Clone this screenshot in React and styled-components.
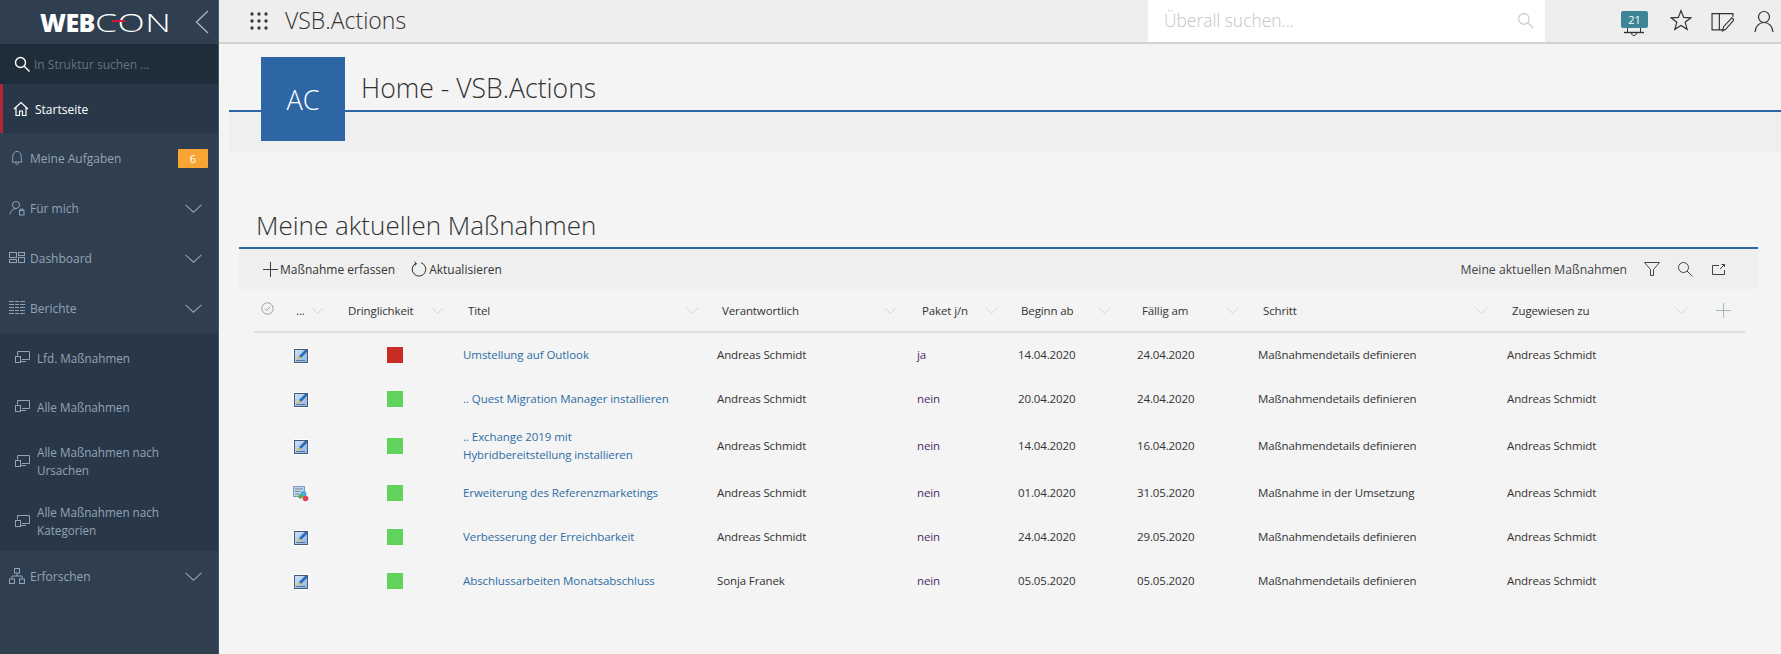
import React from 'react';
import styled, { createGlobalStyle } from 'styled-components';

const rows = [
  { icon: 'edit', prio: 'high', title: ['Umstellung auf Outlook'], owner: 'Andreas Schmidt', pack: 'ja', from: '14.04.2020', due: '24.04.2020', step: 'Maßnahmendetails definieren', to: 'Andreas Schmidt' },
  { icon: 'edit', prio: 'ok', title: ['.. Quest Migration Manager installieren'], owner: 'Andreas Schmidt', pack: 'nein', from: '20.04.2020', due: '24.04.2020', step: 'Maßnahmendetails definieren', to: 'Andreas Schmidt' },
  { icon: 'edit', prio: 'ok', title: ['.. Exchange 2019 mit', 'Hybridbereitstellung installieren'], owner: 'Andreas Schmidt', pack: 'nein', from: '14.04.2020', due: '16.04.2020', step: 'Maßnahmendetails definieren', to: 'Andreas Schmidt', tall: true },
  { icon: 'run', prio: 'ok', title: ['Erweiterung des Referenzmarketings'], owner: 'Andreas Schmidt', pack: 'nein', from: '01.04.2020', due: '31.05.2020', step: 'Maßnahme in der Umsetzung', to: 'Andreas Schmidt' },
  { icon: 'edit', prio: 'ok', title: ['Verbesserung der Erreichbarkeit'], owner: 'Andreas Schmidt', pack: 'nein', from: '24.04.2020', due: '29.05.2020', step: 'Maßnahmendetails definieren', to: 'Andreas Schmidt' },
  { icon: 'edit', prio: 'ok', title: ['Abschlussarbeiten Monatsabschluss'], owner: 'Sonja Franek', pack: 'nein', from: '05.05.2020', due: '05.05.2020', step: 'Maßnahmendetails definieren', to: 'Andreas Schmidt' },
];

const columns = [
  { label: '...', left: 5, pad: 19 },
  { label: 'Dringlichkeit', left: 5, pad: 14 },
  { label: 'Titel', left: 10, pad: 13 },
  { label: 'Verantwortlich', left: 10, pad: 15 },
  { label: 'Paket j/n', left: 10, pad: 15 },
  { label: 'Beginn ab', left: 8, pad: 21 },
  { label: 'Fällig am', left: 10, pad: 14 },
  { label: 'Schritt', left: 10, pad: 14 },
  { label: 'Zugewiesen zu', left: 10, pad: 10 },
];

const Line = ({ size = 16, w = 1, children, vb = 16 }) => (
  <svg width={size} height={size} viewBox={`0 0 ${vb} ${vb}`} fill="none" stroke="currentColor" strokeWidth={w}>
    {children}
  </svg>
);

const Chevron = ({ size = 16 }) => (
  <Line size={size}><path d="M0.5 4.5 L8 11.5 L15.5 4.5" /></Line>
);

const SearchIcon = ({ size = 16, w = 1 }) => (
  <Line size={size} w={w}><circle cx="6.5" cy="6.5" r="5" /><path d="M10 10 L15.5 15.5" /></Line>
);

const HomeIcon = () => (
  <Line w={1.2}><path d="M1 8 L8 1.5 L15 8 M3 6.5 V14.5 H6.5 V10 H9.5 V14.5 H13 V6.5" /></Line>
);
const BellIcon = () => (
  <Line><path d="M3 12 C4 10.5 3.5 7 4 5 C4.6 2.6 6 1.5 8 1.5 C10 1.5 11.4 2.6 12 5 C12.5 7 12 10.5 13 12 Z M6.5 12.5 C6.7 15 9.3 15 9.5 12.5" /></Line>
);
const UserLockIcon = () => (
  <Line>
    <circle cx="7" cy="5" r="3.5" />
    <path d="M1 14.5 C1.5 11 3.5 9 7 8.5" />
    <rect x="10.5" y="10.5" width="4.5" height="4.5" />
    <path d="M11.5 10.5 V9 H14 V10.5" />
  </Line>
);
const DashboardIcon = () => (
  <Line>
    <rect x="0.5" y="2.5" width="7" height="5" />
    <rect x="9.5" y="2.5" width="6" height="3" />
    <rect x="0.5" y="9.5" width="7" height="3" />
    <rect x="9.5" y="7.5" width="6" height="5" />
  </Line>
);
const ReportIcon = () => (
  <Line>
    <path d="M0 1.5 H16 M0 4.5 H16 M0 7.5 H16 M0 10.5 H16 M0 13.5 H16" />
    <path d="M5.5 1 V14 M10.5 1 V14" stroke="#2f3f50" />
  </Line>
);
const ScreenIcon = () => (
  <Line size={15} vb={15}>
    <path d="M2.5 5.5 V1.5 H14.5 V9.5 H7" />
    <rect x="0.5" y="6.5" width="5" height="6" />
    <path d="M6 11.5 H11" />
  </Line>
);
const TreeIcon = () => (
  <Line>
    <rect x="5.5" y="0.5" width="5" height="4.5" />
    <rect x="0.5" y="11" width="5" height="4.5" />
    <rect x="10.5" y="11" width="5" height="4.5" />
    <path d="M8 5 V8 M3 11 V8 H13 V11" />
  </Line>
);
const GridIcon = () => (
  <svg width="18" height="18" viewBox="0 0 18 18" fill="#3a3a3a">
    {[2, 9, 16].flatMap((y) => [2, 9, 16].map((x) => <circle key={`${x}-${y}`} cx={x} cy={y} r="1.7" />))}
  </svg>
);
const StarIcon = () => (
  <Line size={22} vb={20} w={1.1}><path d="M10 1.5 L12.4 7.7 L19 8 L13.8 12.1 L15.6 18.5 L10 14.9 L4.4 18.5 L6.2 12.1 L1 8 L7.6 7.7 Z" /></Line>
);
const PanelIcon = () => (
  <Line size={23} vb={22} w={1.1}>
    <path d="M1 3.5 H8 V19 H1 Z M8 3.5 H21 V6.5 M8 19 H12" />
    <path d="M11 20 L12 16 L20 7.5 L22 9.5 L14 18.5 Z" />
  </Line>
);
const UserIcon = () => (
  <Line size={22} vb={22} w={1.2}>
    <circle cx="11" cy="7" r="5.5" />
    <path d="M2 22 C2.5 16.5 6 12.5 11 12.5 C16 12.5 19.5 16.5 20 22" />
  </Line>
);
const BellBottom = () => (
  <svg width="22" height="10" viewBox="0 0 22 10" fill="none" stroke="#333">
    <path d="M4.5 0 V5 M17.5 0 V5" />
    <path d="M1 5.5 H21" strokeWidth="1.4" />
    <path d="M8.5 6 C8.8 9.5 13.2 9.5 13.5 6" />
  </svg>
);
const FilterIcon = () => (
  <Line><path d="M0.5 1.5 H15.5 L9.5 8.5 V14.5 H6.5 V8.5 Z" /></Line>
);
const ExportIcon = () => (
  <Line><path d="M9 4.5 H2.5 V13.5 H14.5 V9 M10 8 L14.5 3.5 M11.5 3.5 H14.5 V6" /></Line>
);
const PlusIcon = ({ size = 16 }) => (
  <Line size={size}><path d="M8 0 V16 M0 8 H16" /></Line>
);
const RefreshIcon = () => (
  <Line><path d="M5 2.2 A6.8 6.8 0 1 0 10 1.8 M3.5 0.8 L5.4 2.4 L4.2 4.6" /></Line>
);
const CheckCircle = () => (
  <Line size={13} vb={13}><circle cx="6.5" cy="6.5" r="5.7" /><path d="M3.8 6.6 L5.8 8.5 L9.3 4.6" /></Line>
);

const EditGlyph = () => (
  <svg width="16" height="16" viewBox="0 0 16 16" shapeRendering="crispEdges">
    <defs>
      <linearGradient id="editFill" x1="0" y1="0" x2="1" y2="1">
        <stop offset="0" stopColor="#cfe2f7" />
        <stop offset="1" stopColor="#8fb6e2" />
      </linearGradient>
    </defs>
    <rect width="16" height="16" fill="#fff" />
    <rect x="1" y="1" width="14" height="14" fill="#43597c" />
    <rect x="2" y="2" width="12" height="12" fill="url(#editFill)" />
    <path d="M14 2 H12 L6 8 L8 10 L14 4 Z" fill="#2a6cb6" shapeRendering="auto" />
    <path d="M6 8 L8 10 L4 11.5 Z" fill="#f6b312" shapeRendering="auto" />
    <rect x="3" y="12" width="9" height="1" fill="#5d7597" />
  </svg>
);
const RunGlyph = () => (
  <svg width="16" height="16" viewBox="0 0 16 16">
    <rect x="0.5" y="0.5" width="11" height="10" fill="#c5d9ee" stroke="#7d9cc0" />
    <path d="M2 3 H10 M2 5.5 H7 M2 8 H6" stroke="#6c86a6" />
    <circle cx="10.5" cy="8" r="3" fill="#49a9e0" />
    <circle cx="7.5" cy="10.5" r="2.2" fill="#57ae3c" />
    <circle cx="12.5" cy="12.5" r="2.8" fill="#e0405a" />
  </svg>
);

const Logo = () => (
  <LogoText>
    WEB<LogoThin>C<LogoO>O<LogoDash /></LogoO>N</LogoThin>
  </LogoText>
);

const NavItem = ({ icon, label, open, badge, sub, active }) => (
  <NavRow $active={active} $sub={sub}>
    <NavIcon $active={active} $sub={sub}>{icon}</NavIcon>
    <NavLabel $active={active} $sub={sub}>{label}</NavLabel>
    {badge && <Badge>{badge}</Badge>}
    {open && <NavChevron><Chevron size={17} /></NavChevron>}
  </NavRow>
);

const App = () => {
  return (
    <Page>
      <GlobalStyle />
      <Sidebar>
        <Brand>
          <Logo />
          <BackArrow>
            <svg width="14" height="24" viewBox="0 0 14 24" fill="none" stroke="currentColor" strokeWidth="1.4"><path d="M13 1 L1.5 12 L13 23" /></svg>
          </BackArrow>
        </Brand>
        <TreeSearch>
          <TreeSearchIcon><SearchIcon w={1.4} /></TreeSearchIcon>
          <span>In Struktur suchen ...</span>
        </TreeSearch>
        <NavItem active icon={<HomeIcon />} label="Startseite" />
        <NavItem icon={<BellIcon />} label="Meine Aufgaben" badge="6" />
        <NavItem icon={<UserLockIcon />} label="Für mich" open />
        <NavItem icon={<DashboardIcon />} label="Dashboard" open />
        <NavItem icon={<ReportIcon />} label="Berichte" open />
        <SubNav>
          <NavItem sub icon={<ScreenIcon />} label="Lfd. Maßnahmen" />
          <NavItem sub icon={<ScreenIcon />} label="Alle Maßnahmen" />
          <NavItem sub icon={<ScreenIcon />} label={<>Alle Maßnahmen nach<br />Ursachen</>} />
          <NavItem sub icon={<ScreenIcon />} label={<>Alle Maßnahmen nach<br />Kategorien</>} />
        </SubNav>
        <NavItem icon={<TreeIcon />} label="Erforschen" open />
      </Sidebar>

      <Main>
        <TopBar>
          <GridButton><GridIcon /></GridButton>
          <AppName>VSB.Actions</AppName>
          <GlobalSearch>
            <span>Überall suchen...</span>
            <SearchIcon size={17} />
          </GlobalSearch>
          <TopIcons>
            <BellWrap>
              <BellFoot><BellBottom /></BellFoot>
              <CountBadge>21</CountBadge>
            </BellWrap>
            <TopIcon $up><StarIcon /></TopIcon>
            <TopIcon><PanelIcon /></TopIcon>
            <TopIcon><UserIcon /></TopIcon>
          </TopIcons>
        </TopBar>

        <PageHead>
          <HeadTitleRow>
            <HeadTitle>Home - VSB.Actions</HeadTitle>
          </HeadTitleRow>
          <HeadBand />
          <Tile>AC</Tile>
        </PageHead>

        <Section>
          <SectionTitle>Meine aktuellen Maßnahmen</SectionTitle>
          <Toolbar>
            <ToolButton><PlusIcon size={15} /><span>Maßnahme erfassen</span></ToolButton>
            <ToolButton><RefreshIcon /><span>Aktualisieren</span></ToolButton>
            <ToolRight>
              <ViewName>Meine aktuellen Maßnahmen</ViewName>
              <FilterIcon />
              <SearchIcon />
              <ExportIcon />
            </ToolRight>
          </Toolbar>

          <Table>
            <HeadRow>
              <CheckCell><CheckCircle /></CheckCell>
              {columns.map((c) => (
                <HeadCell key={c.label} $left={c.left} $pad={c.pad}>
                  <span>{c.label}</span>
                  <HeadChevron><Chevron size={13} /></HeadChevron>
                </HeadCell>
              ))}
              <AddCell><PlusIcon size={15} /></AddCell>
            </HeadRow>
            {rows.map((r, i) => (
              <Row key={i} $tall={r.tall}>
                <span />
                <IconCell>{r.icon === 'edit' ? <EditGlyph /> : <RunGlyph />}</IconCell>
                <PrioCell><Prio $high={r.prio === 'high'} /></PrioCell>
                <TitleLink>{r.title.map((t) => <div key={t}>{t}</div>)}</TitleLink>
                <Cell>{r.owner}</Cell>
                <PackCell>{r.pack}</PackCell>
                <Cell>{r.from}</Cell>
                <Cell>{r.due}</Cell>
                <Cell>{r.step}</Cell>
                <Cell>{r.to}</Cell>
                <span />
              </Row>
            ))}
          </Table>
        </Section>
      </Main>
    </Page>
  );
};

const GlobalStyle = createGlobalStyle`
  html, body {
    margin: 0;
    padding: 0;
    overflow: hidden;
    background: #f4f4f4;
    font-family: "Open Sans", "Noto Sans", sans-serif;
  }
  * { box-sizing: border-box; }
`;

const Page = styled.div`
  display: flex;
  width: 100%;
  height: 100vh;
`;

const Sidebar = styled.aside`
  flex: 0 0 219px;
  background: #2f3f50;
  border-right: 1px solid #44576b;
  color: #93a3b5;
`;

const Brand = styled.div`
  display: flex;
  align-items: center;
  height: 44px;
  padding-left: 40px;
`;

const LogoText = styled.div`
  width: 150px;
  color: #fff;
  font-weight: 800;
  font-size: 25px;
  letter-spacing: -0.6px;
  line-height: 44px;
  white-space: nowrap;
`;

const LogoThin = styled.span`
  display: inline-block;
  font-weight: 300;
  letter-spacing: 0.4px;
  transform: scaleX(1.42);
  transform-origin: left center;
`;

const LogoO = styled.span`
  position: relative;
`;

const LogoDash = styled.i`
  position: absolute;
  left: -4px;
  width: 9px;
  top: 15px;
  height: 2px;
  background: #d7183c;
`;

const BackArrow = styled.div`
  display: flex;
  margin-left: 5px;
  color: #a7b4c2;
`;

const TreeSearch = styled.div`
  display: flex;
  align-items: center;
  gap: 4px;
  height: 40px;
  padding-left: 14px;
  background: #1f2c39;
  color: #66747f;
  font-size: 12px;
`;

const TreeSearchIcon = styled.span`
  display: flex;
  color: #fff;
`;

const NavRow = styled.div`
  display: flex;
  align-items: center;
  height: ${(p) => (p.$sub ? 'auto' : p.$active ? '49px' : '50px')};
  min-height: ${(p) => (p.$sub ? '49px' : '0')};
  padding-left: ${(p) => (p.$active ? '10px' : p.$sub ? '15px' : '9px')};
  background: ${(p) => (p.$active ? '#293848' : 'transparent')};
  border-left: ${(p) => (p.$active ? '3px solid #b3263a' : '0')};
`;

const NavIcon = styled.span`
  display: flex;
  flex: 0 0 auto;
  margin-right: ${(p) => (p.$active ? '6px' : p.$sub ? '7px' : '5px')};
  color: ${(p) => (p.$active ? '#fff' : '#93a3b5')};
`;

const NavLabel = styled.span`
  padding-top: ${(p) => (p.$sub ? '0' : '2px')};
  font-size: ${(p) => (p.$sub ? '11.7px' : '12px')};
  line-height: 18px;
  color: ${(p) => (p.$active ? '#fff' : '#93a3b5')};
`;

const Badge = styled.span`
  margin-left: auto;
  margin-right: 10px;
  width: 30px;
  height: 19px;
  border-radius: 1px;
  background: #f9a533;
  color: #fff;
  font-size: 11px;
  line-height: 19px;
  text-align: center;
`;

const NavChevron = styled.span`
  display: flex;
  margin-left: auto;
  margin-right: 16px;
`;

const SubNav = styled.div`
  display: flex;
  flex-direction: column;
  height: 218px;
  background: #293848;
  & > div:nth-child(3), & > div:nth-child(4) {
    min-height: 60px;
  }
`;

const Main = styled.main`
  flex: 1;
  min-width: 0;
`;

const TopBar = styled.header`
  display: flex;
  align-items: center;
  height: 44px;
  padding-left: 31px;
  background: #eeeeee;
  border-bottom: 2px solid #d2d2d2;
  color: #333;
`;

const GridButton = styled.span`
  display: flex;
  margin-right: 17px;
`;

const AppName = styled.div`
  flex: 1;
  padding-bottom: 2px;
  font-size: 23px;
  font-weight: 300;
  color: #333;
`;

const GlobalSearch = styled.div`
  display: flex;
  align-items: center;
  justify-content: space-between;
  width: 397px;
  height: 42px;
  padding: 0 11px 2px 16px;
  background: #fff;
  color: #c4c4c4;
  font-size: 17.4px;
  font-weight: 300;
`;

const TopIcons = styled.div`
  display: flex;
  align-items: center;
  width: 236px;
  padding-left: 77px;
  gap: 19px;
`;

const BellWrap = styled.div`
  position: relative;
  width: 24px;
  height: 32px;
  margin-right: 5px;
`;

const BellFoot = styled.span`
  position: absolute;
  left: 1px;
  top: 22px;
  display: flex;
`;

const CountBadge = styled.span`
  position: absolute;
  left: -1px;
  top: 6px;
  width: 27px;
  height: 17px;
  border-radius: 2px;
  background: #3e8598;
  color: #fff;
  font-size: 11px;
  line-height: 17px;
  text-align: center;
`;

const TopIcon = styled.span`
  display: flex;
  margin-top: ${(p) => (p.$up ? '-3px' : '0')};
`;

const PageHead = styled.div`
  position: relative;
  margin-left: 10px;
  height: 108px;
`;

const HeadTitleRow = styled.div`
  display: flex;
  align-items: center;
  height: 68px;
  padding: 22px 0 0 132px;
  border-bottom: 2px solid #2e65a5;
`;

const HeadTitle = styled.h1`
  margin: 0;
  font-size: 26.6px;
  font-weight: 300;
  color: #333;
`;

const HeadBand = styled.div`
  height: 40px;
  background: #efefef;
`;

const Tile = styled.div`
  position: absolute;
  left: 32px;
  top: 13px;
  display: flex;
  align-items: center;
  justify-content: center;
  width: 84px;
  height: 84px;
  background: #2e65a5;
  color: #fff;
  font-size: 27px;
  font-weight: 300;
`;

const Section = styled.section`
  width: 1519px;
  margin: 49px 0 0 20px;
`;

const SectionTitle = styled.h2`
  margin: 0;
  height: 48px;
  padding-left: 17px;
  border-bottom: 2px solid #2e65a5;
  font-size: 26px;
  font-weight: 300;
  line-height: 48px;
  color: #333;
`;

const Toolbar = styled.div`
  display: flex;
  align-items: center;
  gap: 16px;
  height: 40px;
  padding: 0 32px 0 24px;
  background: #efefef;
  color: #333;
  font-size: 12px;
`;

const ToolButton = styled.span`
  display: flex;
  align-items: center;
  gap: 2px;
`;

const ToolRight = styled.div`
  display: flex;
  align-items: center;
  gap: 17px;
  margin-left: auto;
  color: #444;
  font-size: 12.2px;
`;

const ViewName = styled.span``;

const Table = styled.div`
  margin: 0 13px 0 15px;
`;

const tracks = '37px 52px 115px 254px 200px 101px 119px 121px 249px 196px 47px';

const HeadRow = styled.div`
  display: grid;
  grid-template-columns: ${tracks};
  align-items: center;
  height: 44px;
  border-bottom: 2px solid #dedede;
  color: #333;
  font-size: 11.5px;
  letter-spacing: -0.12px;
`;

const CheckCell = styled.span`
  display: flex;
  justify-content: center;
  margin: 0 14px 3px 4px;
  color: #9c9c9c;
`;

const HeadCell = styled.div`
  display: flex;
  align-items: center;
  justify-content: space-between;
  padding: 0 ${(p) => p.$pad}px 0 ${(p) => p.$left}px;
`;

const HeadChevron = styled.span`
  display: flex;
  color: #d0d0d0;
`;

const AddCell = styled.span`
  display: flex;
  padding-left: 18px;
  color: #9fb8a6;
`;

const Row = styled.div`
  display: grid;
  grid-template-columns: ${tracks};
  align-items: center;
  height: ${(p) => (p.$tall ? '50px' : '44px')};
  color: #333;
  font-size: 11.5px;
  line-height: 18px;
  letter-spacing: -0.12px;
`;

const IconCell = styled.span`
  display: flex;
  padding: 2px 0 0 2px;
`;

const PrioCell = styled.span`
  display: flex;
  padding-left: 44px;
`;

const Prio = styled.i`
  width: 16px;
  height: 16px;
  background: ${(p) => (p.$high ? '#c92c22' : '#5fd35b')};
`;

const Cell = styled.span`
  padding-left: 5px;
  white-space: nowrap;
`;

const TitleLink = styled(Cell)`
  color: #2e6da4;
  letter-spacing: -0.07px;
`;

const PackCell = styled(Cell)`
  color: #4c2a66;
`;

export default App;
